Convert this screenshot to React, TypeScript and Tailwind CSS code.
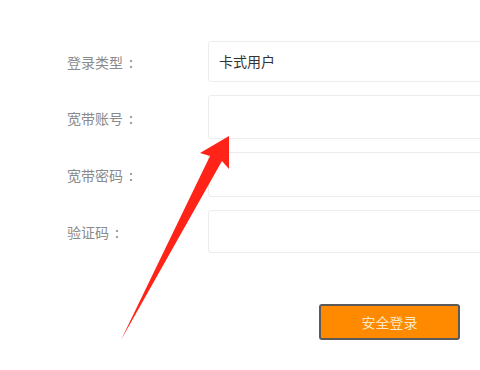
const rows = [
  { label: '登录类型', value: '卡式用户', h: 'h-[41px]' },
  { label: '宽带账号', value: '', h: 'h-[44px]' },
  { label: '宽带密码', value: '', h: 'h-[45px]' },
  { label: '验证码', value: '', h: 'h-[43px]' },
];

export default function App() {
  return (
    <div
      className="relative w-[480px] h-[370px] overflow-hidden bg-white"
      style={{ fontFamily: '"Noto Sans CJK SC", "Noto Sans", sans-serif' }}
    >
      <div className="flex flex-col gap-[13px] pt-[41px] pl-[67px]">
        {rows.map((row) => (
          <div key={row.label} className="flex items-center">
            <div className="w-[141px] shrink-0 flex items-center text-[14px] text-[#8a8a8a] pt-[2px]">
              <span>{row.label}</span>
              <span className="ml-[6px]">:</span>
            </div>
            <div
              className={`${row.h} w-[320px] shrink-0 flex items-center pl-[10px] border border-[#ececec] rounded-[3px] text-[14px] text-[#333]`}
            >
              {row.value}
            </div>
          </div>
        ))}
        <div className="flex pl-[252px] pt-[38px]">
          <button className="w-[141px] h-[36px] rounded-[3px] border-2 border-[#5a5a5a] bg-[#ff8a00] text-[14px] text-[#fbe7c4]">
            安全登录
          </button>
        </div>
      </div>

      {/* red annotation arrow */}
      <svg className="absolute inset-0 pointer-events-none" width="480" height="370" viewBox="0 0 480 370">
        <polygon
          points="229,136 229,169 222,161 121,340 210,156 200,153"
          fill="#ff2417"
          strokeLinejoin="round"
        />
      </svg>
    </div>
  );
}
